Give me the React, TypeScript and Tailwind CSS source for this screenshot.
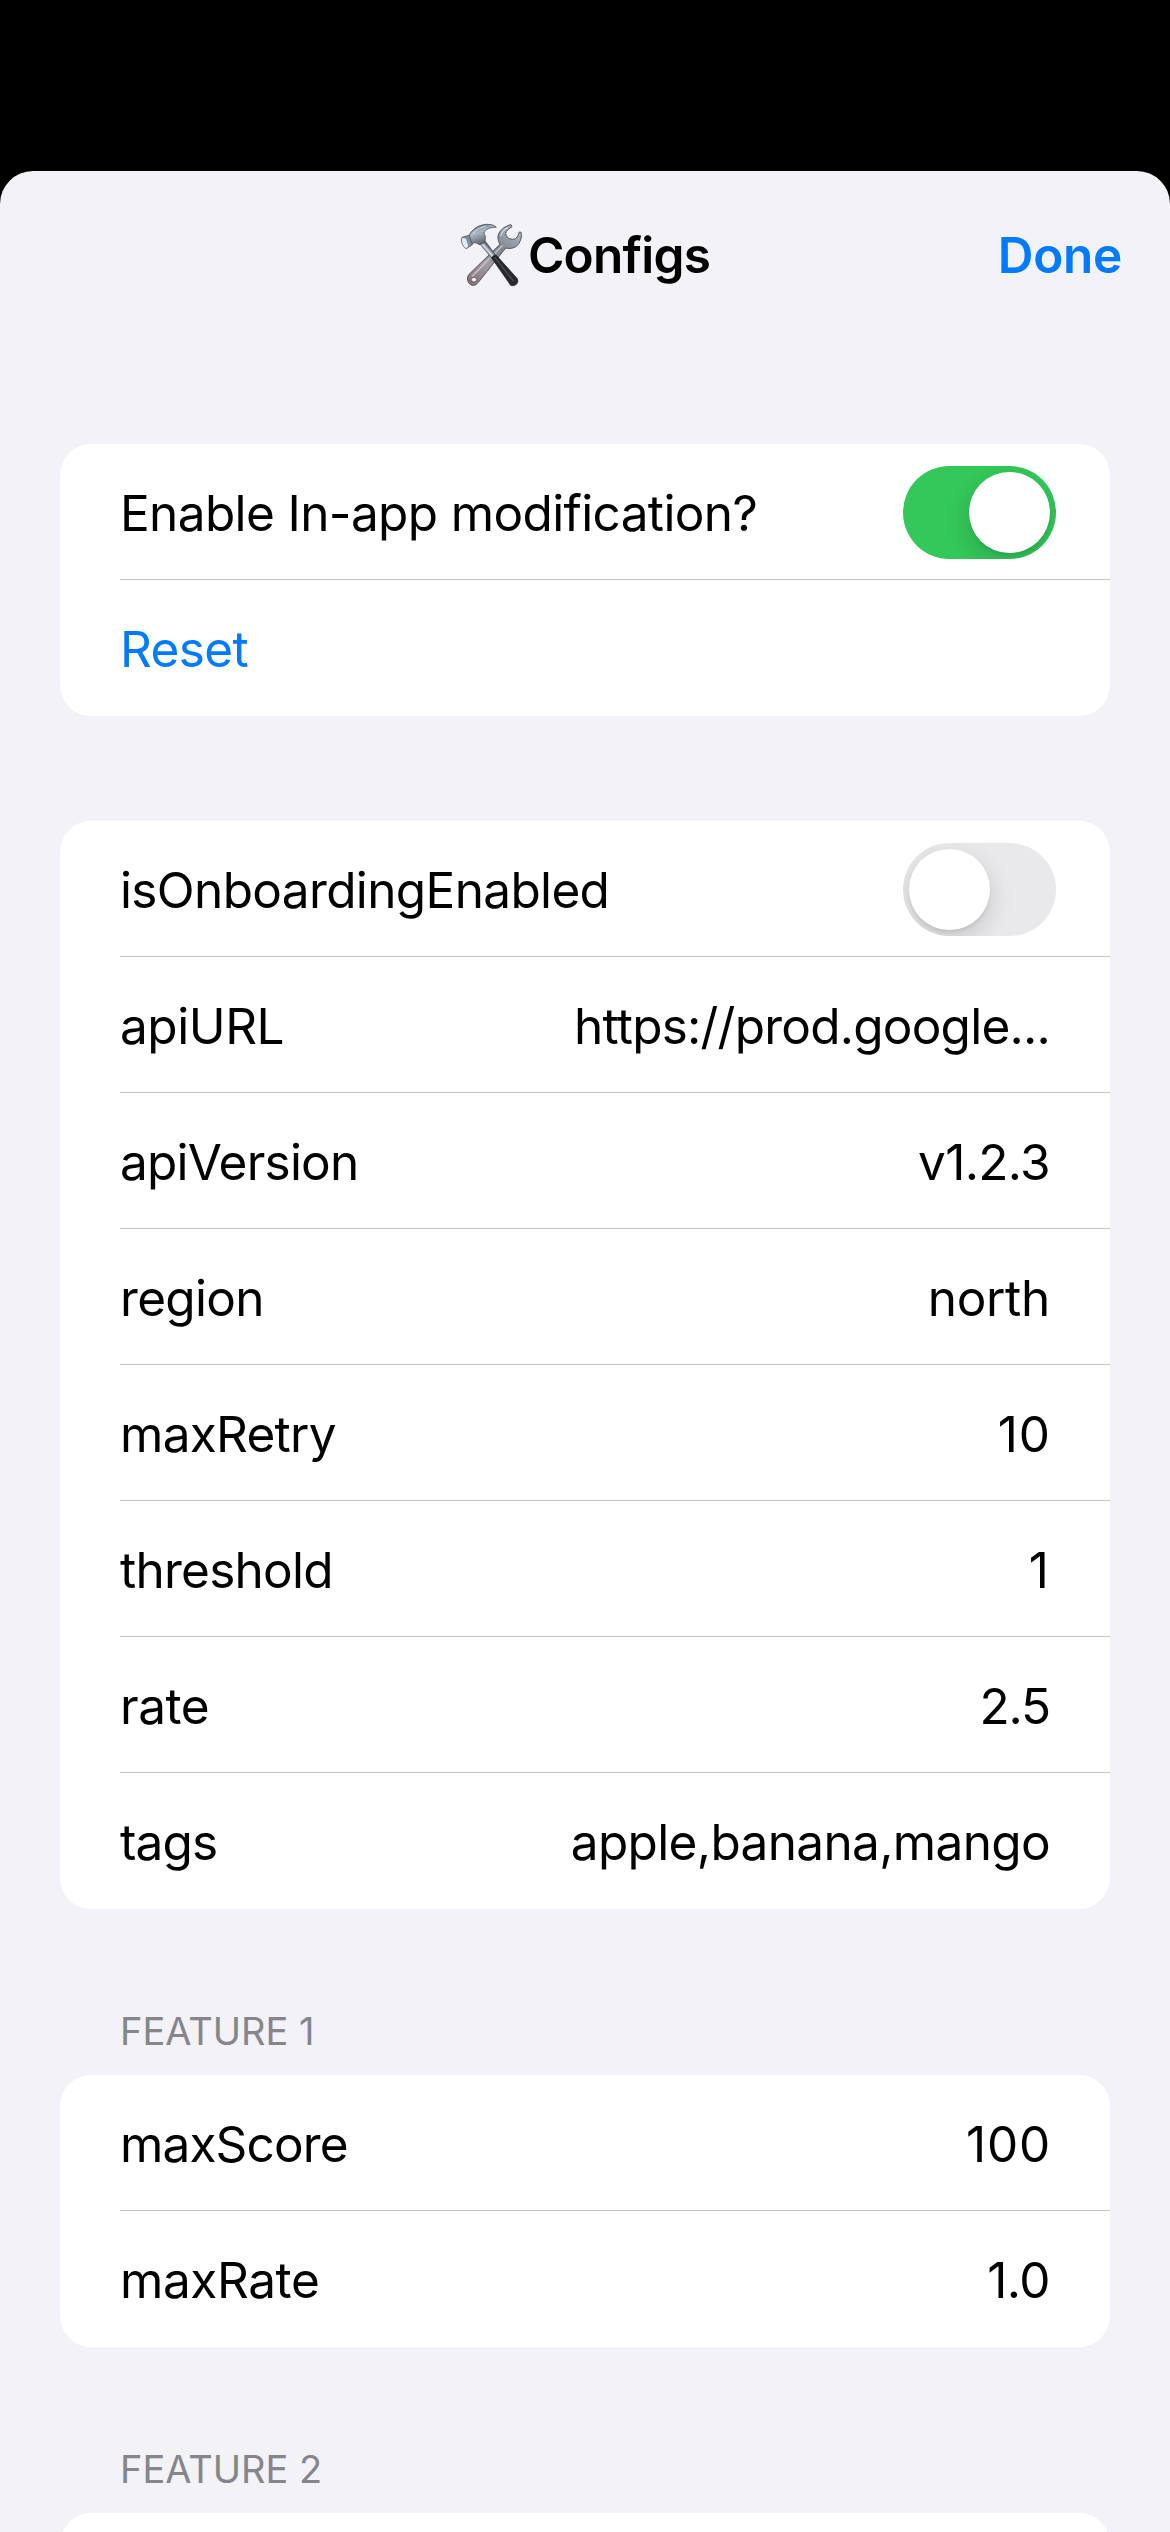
import type { ReactNode } from "react";

function ToolsIcon() {
  return (
    <svg className="h-[66px] w-[66px] shrink-0" viewBox="60 66 198 198" aria-hidden="true">
      <defs>
        <linearGradient id="wrench" gradientUnits="userSpaceOnUse" x1="225" y1="90" x2="95" y2="250">
          <stop offset="0" stopColor="#a9b4bf" />
          <stop offset="0.35" stopColor="#7d848e" />
          <stop offset="0.65" stopColor="#a39ba4" />
          <stop offset="1" stopColor="#8a7278" />
        </linearGradient>
        <linearGradient id="head" x1="0" y1="0" x2="0.5" y2="1">
          <stop offset="0" stopColor="#4e565f" />
          <stop offset="0.45" stopColor="#aab8c6" />
          <stop offset="1" stopColor="#5b5c63" />
        </linearGradient>
        <linearGradient id="shaft" gradientUnits="userSpaceOnUse" x1="132" y1="152" x2="146" y2="140">
          <stop offset="0" stopColor="#5a5f69" />
          <stop offset="0.5" stopColor="#d4e2f0" />
          <stop offset="1" stopColor="#555a62" />
        </linearGradient>
      </defs>
      <path
        d="M213 74C198 77 177 90 174 108C173 118 176 126 180 133L86 224C79 234 82 252 97 256C106 257 111 252 115 247L197 144C212 148 232 144 240 124C244 114 246 105 243 97L238 96C235 106 231 118 217 118C205 117 199 111 197 101C198 92 207 86 216 80Z"
        fill="url(#wrench)"
        stroke="#50535b"
        strokeWidth="3"
        strokeLinejoin="round"
      />
      <path d="M188 136L96 229" stroke="#d2cdd4" strokeWidth="5" opacity="0.75" />
      <path d="M183 108C185 95 194 87 204 83" stroke="#dae3ec" strokeWidth="4" fill="none" opacity="0.8" />
      <ellipse cx="102" cy="239" rx="8" ry="7" fill="#f2f2f7" stroke="#72636a" strokeWidth="3" />
      <path d="M118 130L134 121L168 166L157 177Z" fill="url(#shaft)" stroke="#565a63" strokeWidth="2" />
      <path
        d="M155 174C157 168 163 164 169 166L231 235C239 247 227 261 212 256Z"
        fill="#26282b"
        stroke="#17191b"
        strokeWidth="2"
      />
      <path d="M164 172L221 244" stroke="#4b4f54" strokeWidth="4" />
      <path
        d="M87 106C96 88 116 74 140 73C155 73 165 76 169 82C150 81 134 88 132 100C138 110 138 120 131 130L117 134C108 126 101 127 96 133Z"
        fill="url(#head)"
        stroke="#50565f"
        strokeWidth="2.5"
        strokeLinejoin="round"
      />
      <path d="M98 102C107 90 120 82 138 79" stroke="#d8e4f0" strokeWidth="4" fill="none" opacity="0.7" />
      <path d="M66 112L87 106L97 134L79 146C70 142 61 126 66 112Z" fill="#7e8c9a" stroke="#4e5660" strokeWidth="2.5" />
      <path d="M67 113L78 116L85 139L79 145C70 140 63 126 67 113Z" fill="#dcebfa" />
    </svg>
  );
}

function Toggle({ on }: { on: boolean }) {
  return (
    <div
      role="switch"
      aria-checked={on}
      className={`flex h-[93px] w-[153px] shrink-0 overflow-hidden rounded-full p-[6px] ${
        on ? "justify-end bg-[#34c759]" : "justify-start bg-[#e9e9eb]"
      }`}
    >
      <div className="size-[81px] rounded-full bg-white shadow-[0_9px_24px_rgba(0,0,0,0.15),0_3px_3px_rgba(0,0,0,0.06)]" />
    </div>
  );
}

function Row({ children, toggle = false }: { children: ReactNode; toggle?: boolean }) {
  return (
    <div
      className={`ml-[60px] flex h-[136px] items-center justify-between border-b border-[#c6c6c8] pt-[2px] last:border-transparent ${
        toggle ? "pr-[54px]" : "pr-[60px]"
      }`}
    >
      {children}
    </div>
  );
}

function Card({ children }: { children: ReactNode }) {
  return <section className="mx-[60px] shrink-0 overflow-hidden rounded-[31px] bg-white">{children}</section>;
}

function SectionHeader({ children }: { children: ReactNode }) {
  return (
    <h2 className="flex h-[166px] shrink-0 items-end pb-[25px] pl-[120px] text-[38px] leading-[38px] text-[#85858b]">
      {children}
    </h2>
  );
}

type Entry = { name: string; value: string; nameClass: string; valueClass: string };

const configs: Entry[] = [
  { name: "apiURL", value: "https://prod.google...", nameClass: "tracking-[-0.45px]", valueClass: "tracking-[-0.77px]" },
  { name: "apiVersion", value: "v1.2.3", nameClass: "tracking-[-0.78px]", valueClass: "tracking-[-0.66px]" },
  { name: "region", value: "north", nameClass: "tracking-[-0.68px]", valueClass: "tracking-[-0.3px]" },
  { name: "maxRetry", value: "10", nameClass: "tracking-[-0.73px]", valueClass: "tracking-[1px] -mr-[1px]" },
  { name: "threshold", value: "1", nameClass: "tracking-[-0.75px]", valueClass: "mr-[1px]" },
  { name: "rate", value: "2.5", nameClass: "tracking-[-0.45px]", valueClass: "tracking-[-1.1px]" },
  { name: "tags", value: "apple,banana,mango", nameClass: "tracking-[-0.9px]", valueClass: "tracking-[-0.65px]" },
];

const featureOne: Entry[] = [
  { name: "maxScore", value: "100", nameClass: "tracking-[-0.86px]", valueClass: "tracking-[0.8px] -mr-[1px]" },
  { name: "maxRate", value: "1.0", nameClass: "tracking-[-0.4px]", valueClass: "tracking-[-0.5px]" },
];

function EntryRow({ name, value, nameClass, valueClass }: Entry) {
  return (
    <Row>
      <span className={nameClass}>{name}</span>
      <span className={valueClass}>{value}</span>
    </Row>
  );
}

export default function App() {
  return (
    <div className="h-[2532px] w-[1170px] overflow-hidden bg-black pt-[171px] font-['Inter',sans-serif] text-[49.5px] leading-[60px] text-black">
      <main className="flex h-[2361px] flex-col overflow-hidden rounded-t-[33px] bg-[#f2f2f7]">
        <header className="grid h-[168px] shrink-0 grid-cols-[1fr_auto_1fr] items-center px-[48px] font-semibold">
          <h1 className="col-start-2 flex items-center gap-[2px]">
            <ToolsIcon />
            <span className="tracking-[-0.77px]">Configs</span>
          </h1>
          <button className="justify-self-end tracking-[-0.3px] text-[#007aff]">Done</button>
        </header>

        <div className="h-[105px] shrink-0" />
        <Card>
          <Row toggle>
            <span className="tracking-[-0.63px]">Enable In-app modification?</span>
            <Toggle on />
          </Row>
          <Row>
            <button className="tracking-[-0.62px] text-[#007aff]">Reset</button>
          </Row>
        </Card>

        <div className="h-[105px] shrink-0" />
        <Card>
          <Row toggle>
            <span className="tracking-[-0.64px]">isOnboardingEnabled</span>
            <Toggle on={false} />
          </Row>
          {configs.map((entry) => (
            <EntryRow key={entry.name} {...entry} />
          ))}
        </Card>

        <SectionHeader>FEATURE 1</SectionHeader>
        <Card>
          {featureOne.map((entry) => (
            <EntryRow key={entry.name} {...entry} />
          ))}
        </Card>

        <SectionHeader>FEATURE 2</SectionHeader>
        <Card>
          <div className="h-[136px]" />
        </Card>
      </main>
    </div>
  );
}
